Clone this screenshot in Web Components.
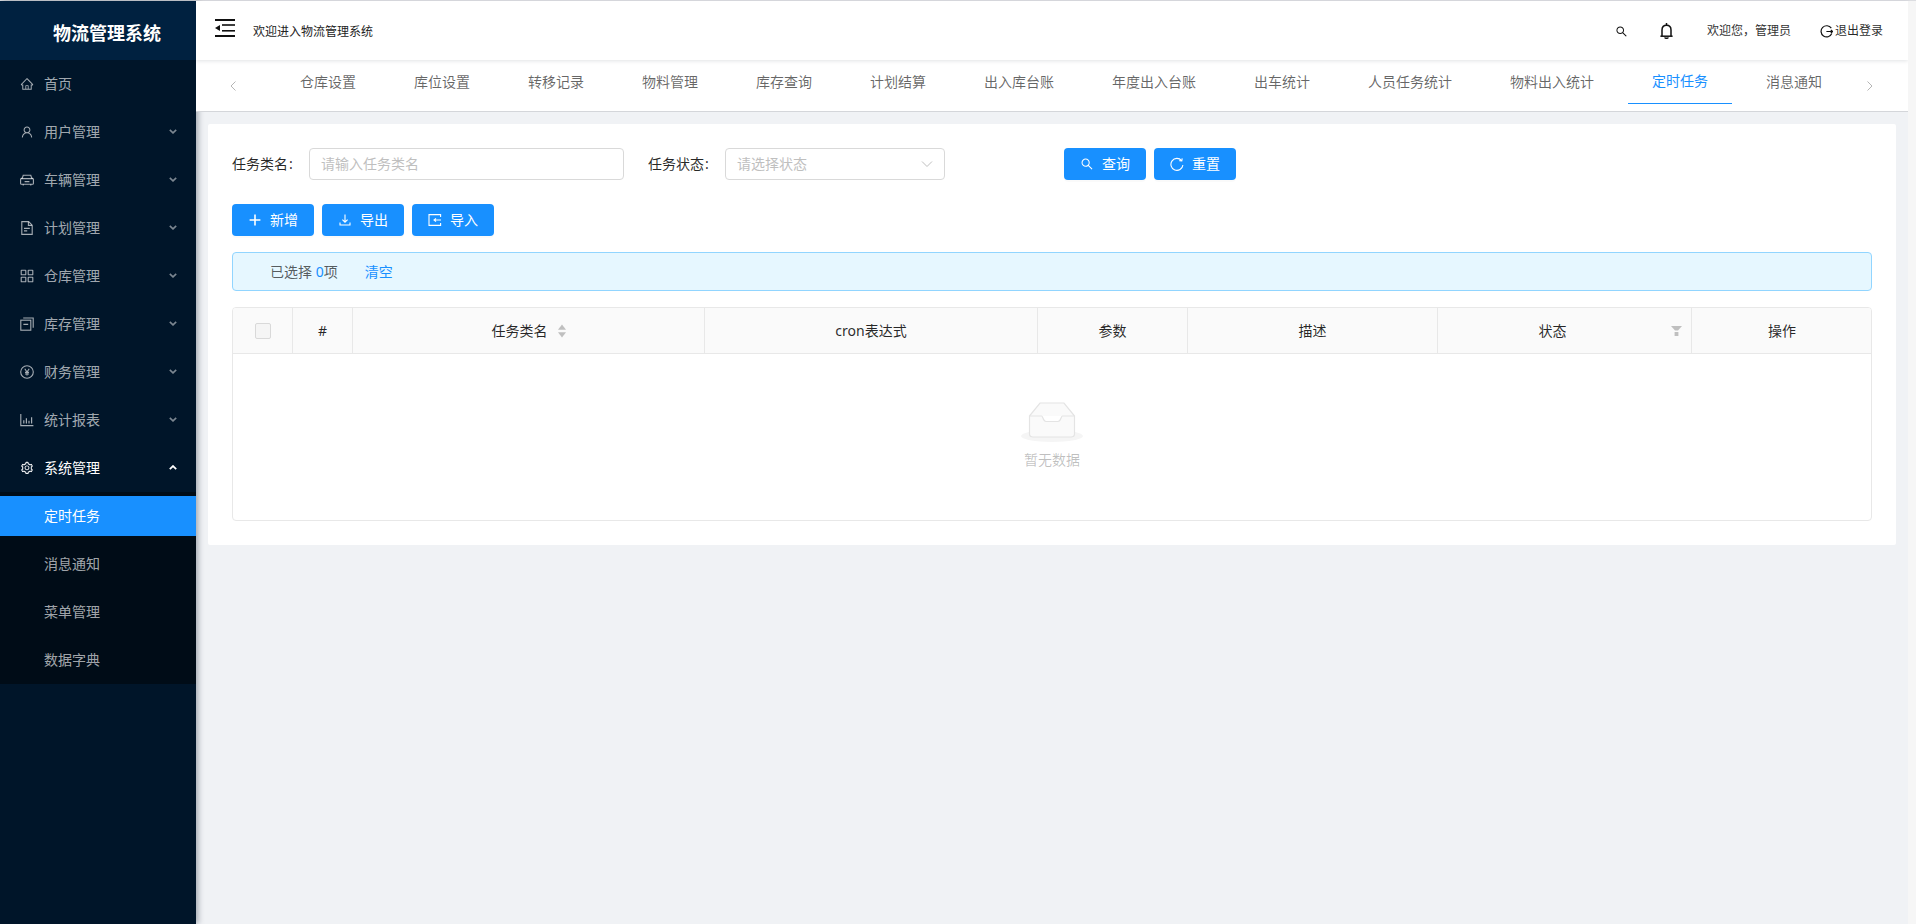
<!DOCTYPE html>
<html lang="zh-CN">
<head>
<meta charset="utf-8">
<title>物流管理系统</title>
<style>
html,body{margin:0;padding:0;height:100%;overflow:hidden;background:#f0f2f5}
body{font-family:"Noto Sans","Noto Sans CJK SC",sans-serif;font-size:14px}
</style>
</head>
<body>
<app-shell>
  <side-nav slot="side" title-text="物流管理系统">
    <nav-item icon="home" label="首页"></nav-item>
    <nav-item icon="user" label="用户管理" caret="down"></nav-item>
    <nav-item icon="car" label="车辆管理" caret="down"></nav-item>
    <nav-item icon="file" label="计划管理" caret="down"></nav-item>
    <nav-item icon="apps" label="仓库管理" caret="down"></nav-item>
    <nav-item icon="switcher" label="库存管理" caret="down"></nav-item>
    <nav-item icon="yen" label="财务管理" caret="down"></nav-item>
    <nav-item icon="chart" label="统计报表" caret="down"></nav-item>
    <nav-item icon="setting" label="系统管理" caret="up" open></nav-item>
    <sub-menu>
      <nav-item sub active label="定时任务"></nav-item>
      <nav-item sub label="消息通知"></nav-item>
      <nav-item sub label="菜单管理"></nav-item>
      <nav-item sub label="数据字典"></nav-item>
    </sub-menu>
  </side-nav>
  <top-bar slot="top"></top-bar>
  <tab-strip slot="top"></tab-strip>
  <content-card>
    <filter-form></filter-form>
    <action-bar></action-bar>
    <selection-alert></selection-alert>
    <data-table></data-table>
  </content-card>
</app-shell>
<script>
const PATHS = {
  home:'<svg viewBox="0 0 1024 1024" fill="currentColor"><path d="M946.5 505L560.1 118.8l-25.9-25.9a31.5 31.5 0 0 0-44.4 0L77.5 505a63.9 63.9 0 0 0-18.8 46c.4 35.2 29.7 63.3 64.9 63.3h42.5V940h691.8V614.3h43.4c17.1 0 33.2-6.7 45.3-18.8a63.6 63.6 0 0 0 18.7-45.3c0-17-6.7-33.1-18.8-45.2zM568 868H456V664h112v204zm217.9-325.7V868H632V640c0-22.1-17.9-40-40-40H432c-22.1 0-40 17.9-40 40v228H238.1V542.3h-96l370-369.7 23.1 23.1L882 542.3h-96.1z"/></svg>',
  user:'<svg viewBox="0 0 1024 1024" fill="currentColor"><path d="M858.5 763.6a374 374 0 0 0-80.6-119.5 375.63 375.63 0 0 0-119.5-80.6c-.4-.2-.8-.3-1.2-.5C719.5 518 760 444.7 760 362c0-137-111-248-248-248S264 225 264 362c0 82.7 40.5 156 102.8 201.1-.4.2-.8.3-1.2.5-44.8 18.9-85 46-119.5 80.6a375.63 375.63 0 0 0-80.6 119.5A371.7 371.7 0 0 0 136 901.8a8 8 0 0 0 8 8.2h60c4.4 0 7.9-3.5 8-7.8 2-77.2 33-149.5 87.8-204.3 56.7-56.7 132-87.9 212.2-87.9s155.5 31.2 212.2 87.9C779 752.7 810 825 812 902.2c.1 4.4 3.6 7.8 8 7.8h60a8 8 0 0 0 8-8.2c-1-47.8-10.9-94.3-29.5-138.2zM512 534c-45.9 0-89.1-17.9-121.6-50.4S340 407.9 340 362c0-45.9 17.9-89.1 50.4-121.6S466.1 190 512 190s89.1 17.9 121.6 50.4S684 316.1 684 362c0 45.9-17.9 89.1-50.4 121.6S557.9 534 512 534z"/></svg>',
  car:'<svg viewBox="0 0 14 14" fill="none" stroke="currentColor" stroke-width="1.1"><path d="M2.2 5.6L3.2 2.3H10.8L11.8 5.6"/><rect x=".6" y="5.6" width="12.8" height="5.6" rx=".8"/><path d="M3.2 11.2v1.3M10.8 11.2v1.3M1 5.2h1.2M11.8 5.2H13M4.6 8.6h4.8"/></svg>',
  file:'<svg viewBox="0 0 14 14" fill="none" stroke="currentColor" stroke-width="1.1"><path d="M1.8.6H8.6L12.2 4.2V13.4H1.8Z"/><path d="M8.4.8V4.4H12M4 7.4H9.8M4 9.9H7.2"/></svg>',
  apps:'<svg viewBox="0 0 14 14" fill="none" stroke="currentColor" stroke-width="1.1"><rect x="1.2" y="1.2" width="4.6" height="4.6" rx=".4"/><rect x="8.2" y="1.2" width="4.6" height="4.6" rx=".4"/><rect x="1.2" y="8.2" width="4.6" height="4.6" rx=".4"/><rect x="8.2" y="8.2" width="4.6" height="4.6" rx=".4"/></svg>',
  switcher:'<svg viewBox="0 0 14 14" fill="none" stroke="currentColor" stroke-width="1.1"><rect x=".8" y="3.2" width="10" height="10"/><path d="M3.2 1H13.2V10.8M3.4 7.4H8.2"/></svg>',
  yen:'<svg viewBox="0 0 14 14" fill="none" stroke="currentColor" stroke-width="1.1"><circle cx="7" cy="7" r="6.3"/><path d="M4.8 3.8L7 7.1L9.2 3.8M7 7.1V10.6M5 7.4H9M5 9H9"/></svg>',
  chart:'<svg viewBox="0 0 14 14" fill="none" stroke="currentColor" stroke-width="1.1"><path d="M.8 1V12.6H13.4"/><path d="M3.8 7.2V10.6M6.4 5.2V10.6M9 7.8V10.6M11.6 4.2V10.6" stroke-width="1.2"/></svg>',
  setting:'<svg viewBox="0 0 1024 1024" fill="currentColor"><path d="M924.8 625.7l-65.5-56c3.1-19 4.7-38.4 4.7-57.8s-1.6-38.8-4.7-57.8l65.5-56a32.03 32.03 0 0 0 9.3-35.2l-.9-2.6a443.74 443.74 0 0 0-79.7-137.9l-1.8-2.1a32.12 32.12 0 0 0-35.1-9.5l-81.3 28.9c-30-24.6-63.5-44-99.7-57.6l-15.7-85a32.05 32.05 0 0 0-25.8-25.7l-2.7-.5c-52.1-9.4-106.9-9.4-159 0l-2.7.5a32.05 32.05 0 0 0-25.8 25.7l-15.8 85.4a351.86 351.86 0 0 0-99 57.4l-81.9-29.1a32 32 0 0 0-35.1 9.5l-1.8 2.1a446.02 446.02 0 0 0-79.7 137.9l-.9 2.6c-4.5 12.5-.8 26.5 9.3 35.2l66.3 56.6c-3.1 18.8-4.6 38-4.6 57.1 0 19.2 1.5 38.4 4.6 57.1L99 625.5a32.03 32.03 0 0 0-9.3 35.2l.9 2.6c18.1 50.4 44.9 96.9 79.7 137.9l1.8 2.1a32.12 32.12 0 0 0 35.1 9.5l81.9-29.1c29.8 24.5 63.1 43.9 99 57.4l15.8 85.4a32.05 32.05 0 0 0 25.8 25.7l2.7.5a449.4 449.4 0 0 0 159 0l2.7-.5a32.05 32.05 0 0 0 25.8-25.7l15.7-85a350 350 0 0 0 99.7-57.6l81.3 28.9a32 32 0 0 0 35.1-9.5l1.8-2.1c34.8-41.1 61.6-87.5 79.7-137.9l.9-2.6c4.5-12.3.8-26.3-9.3-35zM788.3 465.9c2.5 15.1 3.8 30.6 3.8 46.1s-1.3 31-3.8 46.1l-6.6 40.1 74.7 63.9a370.03 370.03 0 0 1-42.6 73.6L721 702.8l-31.4 25.8c-23.9 19.6-50.5 35-79.3 45.8l-38.1 14.3-17.9 97a377.5 377.5 0 0 1-85 0l-17.9-97.2-37.8-14.5c-28.5-10.8-55-26.2-78.7-45.7l-31.4-25.9-93.4 33.2c-17-22.9-31.2-47.6-42.6-73.6l75.5-64.5-6.5-40c-2.4-14.9-3.7-30.3-3.7-45.5 0-15.3 1.2-30.6 3.7-45.5l6.5-40-75.5-64.5c11.3-26.1 25.6-50.7 42.6-73.6l93.4 33.2 31.4-25.9c23.7-19.5 50.2-34.9 78.7-45.7l37.9-14.3 17.9-97.2c28.1-3.2 56.8-3.2 85 0l17.9 97 38.1 14.3c28.7 10.8 55.4 26.2 79.3 45.8l31.4 25.8 92.8-32.9c17 22.9 31.2 47.6 42.6 73.6L781.8 426l6.5 39.9zM512 326c-97.2 0-176 78.8-176 176s78.8 176 176 176 176-78.8 176-176-78.8-176-176-176zm79.2 255.2A111.6 111.6 0 0 1 512 614c-29.9 0-58-11.7-79.2-32.8A111.6 111.6 0 0 1 400 502c0-29.9 11.7-58 32.8-79.2C454 401.6 482.1 390 512 390c29.9 0 58 11.6 79.2 32.8A111.6 111.6 0 0 1 624 502c0 29.9-11.7 58-32.8 79.2z"/></svg>',
  search:'<svg viewBox="0 0 1024 1024" fill="currentColor"><path d="M909.6 854.5L649.9 594.8C690.2 542.7 712 479 712 412c0-80.2-31.3-155.4-87.9-212.1-56.6-56.7-132-87.9-212.1-87.9s-155.5 31.3-212.1 87.9C143.2 256.5 112 331.8 112 412c0 80.1 31.3 155.5 87.9 212.1C256.5 680.8 331.8 712 412 712c67 0 130.6-21.8 182.7-62l259.7 259.6a8.2 8.2 0 0 0 11.6 0l43.6-43.5a8.2 8.2 0 0 0 0-11.6zM570.4 570.4C528 612.7 471.8 636 412 636s-116-23.3-158.4-65.6C211.3 528 188 471.8 188 412s23.3-116.1 65.6-158.4C296 211.3 352.2 188 412 188s116.1 23.2 158.4 65.6S636 352.2 636 412s-23.3 116.1-65.6 158.4z"/></svg>',
  plus:'<svg viewBox="0 0 14 14" fill="none" stroke="currentColor" stroke-width="1.6"><path d="M7 1.6V12.4M1.6 7H12.4"/></svg>',
  download:'<svg viewBox="0 0 14 14" fill="none" stroke="currentColor" stroke-width="1.1"><path d="M7 1.5V9M4.4 6.6L7 9.2L9.6 6.6" /><path d="M2 9.4V12H12V9.4"/></svg>',
  importbox:'<svg viewBox="0 0 14 14" fill="none" stroke="currentColor" stroke-width="1.1"><path d="M12.6 4V1.6H1V12.4H12.6V10"/><path d="M13 7H6M8 5.4L6 7L8 8.6" stroke-width="1.1"/></svg>',
  reload:'<svg viewBox="0 0 14 14" fill="none" stroke="currentColor" stroke-width="1.1"><path d="M11.6 3.6A6 6 0 1 0 12.9 8"/><path d="M12.2 1.4L11.8 3.9L9.3 3.6" stroke-width="1.1"/></svg>',
  bell:'<svg viewBox="0 0 13 16" fill="none" stroke="currentColor" stroke-width="1.5"><path d="M2 13V7C2 3.8 3.8 2.2 6.5 2.2S11 3.8 11 7V13"/><path d="M.4 13.2H12.6"/><path d="M6.5 0V2.2M4.8 14.4C5 15.6 8 15.6 8.2 14.4" /></svg>',
  logout:'<svg viewBox="0 0 13 13" fill="none" stroke="currentColor" stroke-width="1.2"><path d="M11.3 3.2A5.6 5.6 0 1 0 11.8 8.6"/><path d="M6.4 6.5H12.6M10.8 5L12.6 6.5L10.8 8"/></svg>',
  back:'<svg viewBox="0 0 8 12" fill="none" stroke="currentColor" stroke-width="1"><path d="M6.5 1.5L2 6L6.5 10.5"/></svg>',
  next:'<svg viewBox="0 0 8 12" fill="none" stroke="currentColor" stroke-width="1"><path d="M1.5 1.5L6 6L1.5 10.5"/></svg>',
  down:'<svg viewBox="0 0 12 12" fill="none" stroke="currentColor" stroke-width="1"><path d="M1 3.5L6 8.5L11 3.5"/></svg>',
  fold:'<svg viewBox="0 0 20 18" fill="currentColor"><rect x="0" y="0" width="20" height="2"/><rect x="0" y="16" width="20" height="2"/><rect x="7" y="5.2" width="13" height="1.6"/><rect x="7" y="11" width="13" height="1.6"/><path d="M0 9L5 6V12Z"/></svg>',
  sort:'<svg viewBox="0 0 8 14" fill="currentColor"><path d="M4 .5L8 5.8H0Z"/><path d="M4 13.5L0 8.2H8Z"/></svg>',
  filter:'<svg viewBox="0 0 11 10" fill="currentColor"><path d="M0 0H11L7 4.6H4Z"/><rect x="3.6" y="6" width="3.8" height="4"/></svg>',
  caretv:'<svg viewBox="0 0 10 6" fill="none" stroke="currentColor" stroke-width="2"><path d="M1 1L5 4.8L9 1"/></svg>',
  caretup:'<svg viewBox="0 0 10 6" fill="none" stroke="currentColor" stroke-width="2.2"><path d="M1 5L5 1.2L9 5"/></svg>'
};

function define(name, css, html){
  customElements.define(name, class extends HTMLElement{
    constructor(){super();this.attachShadow({mode:'open'});}
    connectedCallback(){
      if(this._done) return; this._done=true;
      const a=n=>this.getAttribute(n);
      this.shadowRoot.innerHTML='<style>'+css+'</style>'+(typeof html==='function'?html(a):html);
    }
  });
}

define('ui-icon',':host{display:inline-flex;flex:none;width:var(--w,14px);height:var(--h,14px)}svg{display:block;width:100%;height:100%}',
  a=>PATHS[a('name')]||'');

define('app-shell',`
  :host{display:flex;height:100vh;box-sizing:border-box;border-top:1px solid #dcdde1;background:#f0f2f5;color:rgba(0,0,0,.85)}
  .main{flex:1;min-width:0;display:flex;flex-direction:column}
  .top{position:relative;z-index:3;display:block}
  .body{flex:1;padding:12px 12px 0 12px;min-height:0}
  .track{flex:none;width:8px;background:#f6f6f6;position:relative;z-index:4}
`,`<slot name="side"></slot>
  <div class="main"><div class="top"><slot name="top"></slot></div><div class="body"><slot></slot></div></div>
  <div class="track"></div>`);

define('side-nav',`
  :host{display:block;flex:none;width:196px;background:#001529;position:relative;z-index:2;box-shadow:2px 0 6px rgba(0,21,41,.35);color:rgba(255,255,255,.65)}
  .logo{height:59px;background:#002140;display:flex;align-items:center;padding-left:53px;padding-top:5px;box-sizing:border-box;font-size:18px;font-weight:700;color:#fff;line-height:24px;white-space:nowrap}
  .menu{display:flex;flex-direction:column}
`,a=>`<div class="logo">${a('title-text')}</div><div class="menu"><slot></slot></div>`);

define('sub-menu',':host{display:flex;flex-direction:column;background:#000c17}','<slot></slot>');

define('nav-item',`
  :host{display:flex;align-items:center;flex:none;height:40px;margin:4px 0;padding-left:20px;box-sizing:border-box;line-height:22px;font-size:14px;position:relative;color:rgba(255,255,255,.65);white-space:nowrap}
  :host([open]){color:#fff}
  :host([sub]){padding-left:44px}
  :host([active]){background:#1890ff;color:#fff}
  .ic{margin-right:10px}
  .chev{margin-left:auto;margin-right:19px;--w:8px;--h:5px;margin-top:-1px;opacity:.75}
  :host([open]) .chev{opacity:1}
`,a=>`${a('icon')?`<ui-icon class="ic" name="${a('icon')}"></ui-icon>`:''}<span>${a('label')}</span>${a('caret')?`<ui-icon class="chev" name="${a('caret')==='up'?'caretup':'caretv'}"></ui-icon>`:''}`);

define('top-bar',`
  :host{display:flex;align-items:center;height:59px;box-sizing:border-box;background:#fff;box-shadow:0 1px 4px rgba(0,21,41,.12);position:relative;z-index:2;padding-right:25px;padding-top:1px;font-size:12px;color:rgba(0,0,0,.85);white-space:nowrap}
  .fold{--w:20px;--h:18px;margin:-7px 0 0 19px;color:#111}
  .welcome{margin-left:18px;margin-top:1px;color:#222}
  .sp{flex:1}
  .search{--w:13px;--h:13px;color:#111}
  .bell{--w:13px;--h:16px;margin-left:32px;margin-top:-1px;color:#111}
  .hi{margin-left:34px;color:#333}
  .logout{--w:13px;--h:13px;margin-left:29px;margin-right:2px;color:#111}
  span{line-height:18px}
`,`<ui-icon class="fold" name="fold"></ui-icon><span class="welcome">欢迎进入物流管理系统</span><span class="sp"></span>
  <ui-icon class="search" name="search"></ui-icon><ui-icon class="bell" name="bell"></ui-icon><span class="hi">欢迎您，管理员</span><ui-icon class="logout" name="logout"></ui-icon><span>退出登录</span>`);

const TABS=['仓库设置','库位设置','转移记录','物料管理','库存查询','计划结算','出入库台账','年度出入台账','出车统计','人员任务统计','物料出入统计','定时任务','消息通知'];
define('tab-strip',`
  :host{display:flex;height:52px;box-sizing:border-box;background:#fff;border-bottom:1px solid #d4d6da;font-size:14px;color:rgba(0,0,0,.6)}
  .arrow{--w:8px;--h:12px;color:#b5b5b5;flex:none;align-self:center}
  .l{margin-left:33px;margin-right:39px}
  .r{margin-left:20px}
  .tabs{display:flex;gap:10px}
  .tab{height:44px;box-sizing:border-box;padding:0 24px 1px;display:flex;align-items:center;line-height:22px;white-space:nowrap}
  .tab.on{color:#1890ff;border-bottom:1.4px solid #1890ff}
`,`<ui-icon class="arrow l" name="back"></ui-icon><div class="tabs">${TABS.map(t=>`<div class="tab${t==='定时任务'?' on':''}">${t}</div>`).join('')}</div><ui-icon class="arrow r" name="next"></ui-icon>`);

define('content-card',':host{display:block;background:#fff;padding:24px;border-radius:2px}','<slot></slot>');

define('ui-button',`
  :host{display:inline-flex;align-items:center;justify-content:center;width:82px;height:32px;gap:8px;box-sizing:border-box;background:#1890ff;color:#fff;border-radius:4px;font-size:14px;line-height:22px;box-shadow:0 2px 0 rgba(0,0,0,.02);white-space:nowrap}
  ui-icon{--w:14px;--h:14px}
`,a=>`<ui-icon name="${a('icon')}"></ui-icon><span><slot></slot></span>`);

define('filter-form',`
  :host{display:flex;align-items:center;height:32px;font-size:14px;color:rgba(0,0,0,.85);white-space:nowrap}
  .lab{width:77px;flex:none;line-height:22px}
  .lab i{font-style:normal;margin-left:1px}
  .input{flex:none;box-sizing:border-box;height:32px;border:1px solid #d9d9d9;border-radius:4px;display:flex;align-items:center;padding:0 11px;color:#bfbfbf;line-height:22px}
  .a{width:315px;margin-right:24px}
  .b{width:220px;justify-content:space-between;margin-right:119px}
  .b ui-icon{--w:12px;--h:12px;color:#bfbfbf}
  .btns{display:flex;gap:8px}
`,`<span class="lab">任务类名<i>:</i></span><div class="input a">请输入任务类名</div>
  <span class="lab">任务状态<i>:</i></span><div class="input b"><span>请选择状态</span><ui-icon name="down"></ui-icon></div>
  <div class="btns"><ui-button icon="search">查询</ui-button><ui-button icon="reload">重置</ui-button></div>`);

define('action-bar',':host{display:flex;gap:8px;margin-top:24px}',
  `<ui-button icon="plus">新增</ui-button><ui-button icon="download">导出</ui-button><ui-button icon="importbox">导入</ui-button>`);

define('selection-alert',`
  :host{display:flex;align-items:center;height:39px;box-sizing:border-box;margin-top:16px;padding-left:37px;background:#e6f7ff;border:1px solid #91d5ff;border-radius:4px;font-size:14px;line-height:22px;color:rgba(0,0,0,.65);white-space:pre}
  b{font-weight:400;color:#1890ff}
  a{color:#1890ff;margin-left:27px}
`,`<span>已选择 <b>0</b>项</span><a>清空</a>`);

const COLS=[['',60],['#',60],['任务类名',352,'has-sort'],['cron表达式',333],['参数',150],['描述',250],['状态',254,'has-filter'],['操作',180]];
define('data-table',`
  :host{display:block;margin-top:16px;height:214px;box-sizing:border-box;border:1px solid #e8e8e8;border-radius:4px;overflow:hidden;font-size:14px;color:rgba(0,0,0,.85)}
  .head{display:grid;grid-template-columns:${COLS.map(c=>c[1]+'px').join(' ')};height:46px;box-sizing:border-box;background:#fafafa;border-bottom:1px solid #e8e8e8}
  .th{position:relative;display:flex;align-items:center;justify-content:center;gap:10px;box-sizing:border-box;border-right:1px solid #e8e8e8;line-height:22px;white-space:nowrap}
  .th:last-child{border-right:0}
  .th.has-filter{padding-right:24px}
  .sort{--w:8px;--h:14px;color:#bfbfbf}
  .filt{--w:11px;--h:10px;color:#bfbfbf;position:absolute;right:9px;top:18px}
  .box{width:16px;height:16px;box-sizing:border-box;border:1px solid #d9d9d9;border-radius:2px;background:#f5f5f5}
  .empty{display:flex;flex-direction:column;align-items:center;padding-top:48px;color:rgba(0,0,0,.25);line-height:22px}
  svg{display:block;width:64px;height:40px}
  .txt{margin-top:7px}
`,`<div class="head">${COLS.map((c,i)=>`<div class="th ${c[2]||''}">${i===0?'<div class="box"></div>':`<span>${c[0]}</span>`}${c[2]==='has-sort'?'<ui-icon class="sort" name="sort"></ui-icon>':''}${c[2]==='has-filter'?'<ui-icon class="filt" name="filter"></ui-icon>':''}</div>`).join('')}</div>
  <div class="empty"><svg viewBox="0 0 64 40"><ellipse cx="32" cy="34" rx="31" ry="6" fill="#f5f5f5"/><path d="M9.5 14L20 1H44L54.5 14" fill="#fafafa" stroke="#e4e4e4" stroke-width="1.2"/><path d="M9.5 14H21.5C23 14 23 19.5 26 19.5H38C41 19.5 41 14 42.5 14H54.5V32C54.5 34 53 35 51 35H13C11 35 9.5 34 9.5 32Z" fill="#fafafa" stroke="#e4e4e4" stroke-width="1.2"/></svg><div class="txt">暂无数据</div></div>`);
</script>
</body>
</html>
